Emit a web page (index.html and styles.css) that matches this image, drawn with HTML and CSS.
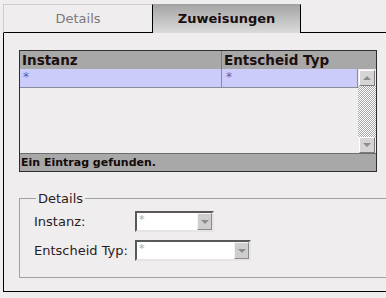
FILE: index.html
```html
<!DOCTYPE html>
<html>
    <head>
        <meta charset=utf-8>
        <title>Zuweisungen</title>
        <link rel="stylesheet" href="styles.css">
    </head>
    <body>
        <div class="tabs">
            <div class="tab">Details</div>
            <div class="tab active">Zuweisungen</div>
            <div class="tab-rest"></div>
        </div>

        <div class="panel">
            <div class="grid">
                <div class="grid-head">
                    <div class="col col-1">Instanz</div>
                    <div class="col col-2">Entscheid Typ</div>
                </div>
                <div class="grid-body">
                    <div class="rows">
                        <div class="row selected">
                            <div class="col col-1">*</div>
                            <div class="col col-2">*</div>
                        </div>
                    </div>
                    <div class="scrollbar">
                        <div class="sb-btn"><span class="arrow up"></span></div>
                        <div class="sb-track"></div>
                        <div class="sb-btn"><span class="arrow down"></span></div>
                    </div>
                </div>
                <div class="grid-status">Ein Eintrag gefunden.</div>
            </div>

            <fieldset class="details">
                <legend>Details</legend>
                <div class="field">
                    <label>Instanz:</label>
                    <div class="combo short">
                        <span class="combo-value">*</span>
                        <span class="combo-btn"><span class="arrow down"></span></span>
                    </div>
                </div>
                <div class="field">
                    <label>Entscheid Typ:</label>
                    <div class="combo long">
                        <span class="combo-value">*</span>
                        <span class="combo-btn"><span class="arrow down"></span></span>
                    </div>
                </div>
            </fieldset>
        </div>
    </body>
</html>
```

FILE: styles.css
```css
html, body {
    margin: 0;
    padding: 0;
    overflow: hidden;
    width: 100%;
    height: 100%;
    background: #f0edef;
}

body {
    font-family: "DejaVu Sans", Verdana, sans-serif;
    font-size: 12px;
    color: #2a1c1c;
}

/* tabs */

.tabs {
    display: flex;
    padding: 4px 0 0 3px;
}

.tab {
    box-sizing: border-box;
    height: 29px;
    width: 150px;
    border-top: 1px solid #cfcccd;
    border-left: 1px solid #cfcccd;
    border-right: 1px solid #000;
    border-bottom: 1px solid #000;
    background: #f0edef;
    color: #7c7878;
    font-size: 13px;
    line-height: 27px;
    text-align: center;
}

.tab + .tab {
    border-left: 0;
}

.tab.active {
    width: 148px;
    border-bottom: 0;
    border-top-color: #a0a0a0;
    background: linear-gradient(#a6a5a6, #dcdbdc);
    color: #1a0d0d;
    font-weight: bold;
}

.tab-rest {
    flex: 1;
    border-bottom: 1px solid #000;
}

/* panel */

.panel {
    height: 259px;
    margin-left: 3px;
    padding: 17px 0 0 15px;
    box-sizing: border-box;
    border-left: 1px solid #000;
    border-bottom: 1px solid #000;
}

/* grid */

.grid {
    width: 358px;
    box-sizing: border-box;
    border: 1px solid #2e2e2e;
}

.grid-head {
    display: flex;
    height: 18px;
    background: #a9a8a9;
    font-weight: bold;
    font-size: 13.5px;
    line-height: 19px;
    color: #1c0f0f;
}

.col {
    box-sizing: border-box;
    padding-left: 2px;
    white-space: nowrap;
    overflow: hidden;
}

.col-1 {
    width: 202px;
    border-right: 1px solid #7c7b7c;
}

.col-2 {
    width: 135px;
}

.grid-body {
    display: flex;
    height: 84px;
    border-bottom: 1px solid #6e6d6e;
}

.rows {
    flex: 1;
}

.row {
    display: flex;
    height: 19px;
    box-sizing: border-box;
    border-bottom: 1px solid #8a8a9a;
    border-right: 1px solid #8a8a9a;
    line-height: 16px;
    color: #5b5bb0;
}

.row.selected {
    background: #ccccfb;
}

.row .col-1 {
    border-right-color: #8a8a9a;
    padding-left: 3px;
}

.row .col-2 {
    flex: 1;
    padding-left: 4px;
}

.scrollbar {
    display: flex;
    flex-direction: column;
    width: 18px;
}

.sb-btn {
    display: flex;
    align-items: center;
    justify-content: center;
    height: 16px;
    box-sizing: border-box;
    margin: 1px 1px 0 1px;
    border: 1px solid;
    border-color: #fff #7c7b7c #7c7b7c #fff;
    background: #d6d4d5;
}

.sb-btn:last-child {
    margin-top: 0;
}

.sb-track {
    flex: 1;
    background: repeating-conic-gradient(#a8a8a8 0 25%, #fff 0 50%) 0 0 / 2px 2px;
}

.arrow {
    width: 0;
    height: 0;
    border-left: 4px solid transparent;
    border-right: 4px solid transparent;
}

.arrow.up {
    border-bottom: 4px solid #8c8c8c;
}

.arrow.down {
    border-top: 4px solid #8c8c8c;
}

.grid-status {
    height: 17px;
    background: #a9a8a9;
    font-weight: bold;
    font-size: 11px;
    line-height: 18px;
    padding-left: 1px;
    color: #130a0a;
}

/* details */

.details {
    margin: 19px 0 0 0;
    padding: 5px 0 16px 14px;
    border: 1px solid #a3a1a2;
    border-right: 0;
    font-size: 13px;
}

.details legend {
    margin-left: 2px;
    padding: 0 2px;
    line-height: 15px;
}

.field {
    display: flex;
    align-items: center;
    height: 21px;
    margin-bottom: 8px;
}

.field:last-child {
    margin-bottom: 0;
}

.field label {
    width: 101px;
}

.combo {
    display: flex;
    box-sizing: border-box;
    height: 21px;
    border: 2px solid;
    border-color: #5a5858 #e6e4e4 #e6e4e4 #5a5858;
    background: #fff;
}

.combo.short {
    width: 79px;
}

.combo.long {
    width: 116px;
}

.combo-value {
    flex: 1;
    padding-left: 2px;
    color: #a8a6a6;
    font-size: 11px;
    line-height: 14px;
}

.combo-btn {
    display: flex;
    align-items: center;
    justify-content: center;
    width: 15px;
    box-sizing: border-box;
    border: 1px solid;
    border-color: #f4f4f4 #8a8a8a #8a8a8a #f4f4f4;
    background: #cfcecf;
}
```
